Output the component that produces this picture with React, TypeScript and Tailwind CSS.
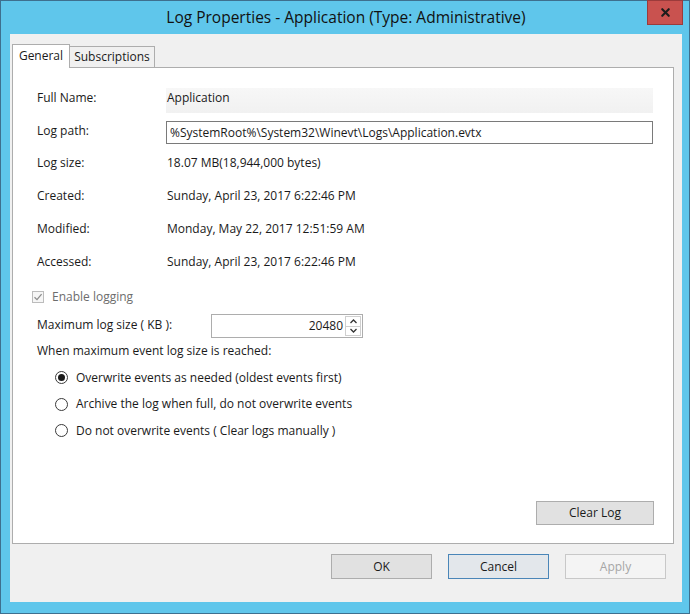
import { X } from 'lucide-react'

const font = { fontFamily: '"Open Sans", "Noto Sans", sans-serif' }

function InfoRow({ label, value }: { label: string; value: string }) {
  return (
    <div className="flex h-[33px] items-center">
      <div className="w-[129px] shrink-0">{label}</div>
      <div className="pl-[1px]">{value}</div>
    </div>
  )
}

function Radio({ checked, label }: { checked?: boolean; label: string }) {
  return (
    <div className="flex h-[26.5px] items-center">
      <span className="ml-[18px] flex h-[13px] w-[13px] items-center justify-center rounded-full border border-[#3a3a3a] bg-white">
        {checked && <span className="h-[7px] w-[7px] rounded-full bg-[#1a1a1a]" />}
      </span>
      <span className="ml-[8px]">{label}</span>
    </div>
  )
}

function DlgButton({ label, variant }: { label: string; variant?: 'focus' | 'disabled' }) {
  let cls = 'border-[#adadad] bg-[#e1e1e1] text-[#1a1a1a]'
  if (variant === 'focus') cls = 'border-[#4a86b8] bg-[#e3e7eb] text-[#1a1a1a]'
  if (variant === 'disabled') cls = 'border-[#c8c8c8] bg-[#f4f4f4] text-[#a6a6a6]'
  return (
    <div className={`flex h-[25px] w-[101px] items-center justify-center border ${cls}`}>
      {label}
    </div>
  )
}

export default function App() {
  return (
    <div
      className="flex h-[614px] w-[690px] flex-col border border-[#3e6f8e] bg-[#5fc6eb] pb-[11px] pl-[9px] pr-[7px] text-[12px] text-[#1a1a1a]"
      style={font}
    >
      {/* title bar */}
      <div className="relative flex h-[33px] shrink-0 items-center justify-center">
        <span className="text-[15.5px] text-[#111]">Log Properties - Application (Type: Administrative)</span>
        <div className="absolute right-[-1px] top-[-1px] flex h-[25px] w-[36px] items-center justify-center border border-[#9b3b3b] bg-[#c9524f]">
          <X size={13} strokeWidth={4} className="text-[#1c1c1c]" />
        </div>
      </div>

      {/* client area */}
      <div className="flex flex-1 flex-col bg-[#f0f0f0] pl-[2px] pr-[8px] pt-[11px]">
        {/* tabs */}
        <div className="relative z-10 flex h-[23px] items-end">
          <div className="flex h-[24px] w-[58px] items-center justify-center border border-b-0 border-[#adadad] bg-white pb-[1px]">
            General
          </div>
          <div className="mb-[1px] flex h-[21px] w-[85px] items-center justify-center border border-b-0 border-l-0 border-[#adadad] bg-[#f0f0f0]">
            Subscriptions
          </div>
        </div>

        {/* tab panel */}
        <div className="-mt-[1px] flex h-[477px] flex-col border border-[#adadad] bg-white pl-[24px]">
          <div className="mt-[20px] flex h-[25px] items-center pb-[6px]">
            <div className="w-[129px] shrink-0">Full Name:</div>
            <div className="-mb-[6px] flex h-[25px] w-[487px] items-center bg-gradient-to-b from-[#f7f7f7] to-[#f1f1f1] pb-[6px] pl-[1px]">
              Application
            </div>
          </div>
          <div className="mt-[8px] flex h-[23px] items-center">
            <div className="w-[129px] shrink-0 pb-[3px]">Log path:</div>
            <div className="flex h-[23px] w-[487px] items-center border border-[#7a7a7a] bg-white pl-[3px]">
              %SystemRoot%\System32\Winevt\Logs\Application.evtx
            </div>
          </div>
          <div className="mt-[2px]">
            <InfoRow label="Log size:" value="18.07 MB(18,944,000 bytes)" />
            <InfoRow label="Created:" value="Sunday, April 23, 2017 6:22:46 PM" />
            <InfoRow label="Modified:" value="Monday, May 22, 2017 12:51:59 AM" />
            <InfoRow label="Accessed:" value="Sunday, April 23, 2017 6:22:46 PM" />
          </div>

          <div className="-ml-[5px] mt-[12px] flex h-[14px] items-center text-[#6d6d6d]">
            <span className="flex h-[12px] w-[12px] items-center justify-center border border-[#bcbcbc] bg-[#f6f6f6]">
              <svg width="10" height="10" viewBox="0 0 10 10">
                <path d="M1.5 5.2 L4 7.6 L8.6 2.2" fill="none" stroke="#8d8d8d" strokeWidth="1.3" />
              </svg>
            </span>
            <span className="ml-[8px]">Enable logging</span>
          </div>

          <div className="mt-[10px] flex h-[24px] items-center">
            <div className="w-[174px] shrink-0 pb-[3px]">Maximum log size ( KB ):</div>
            <div className="flex h-[24px] w-[152px] items-center border border-[#adadad] bg-white">
              <div className="flex-1 pr-[2px] text-right">20480</div>
              <div className="mr-[1px] flex h-[20px] w-[16px] flex-col border border-[#cfcfcf]">
                <div className="flex flex-1 items-center justify-center border-b border-[#cfcfcf]">
                  <svg width="7" height="5" viewBox="0 0 7 5">
                    <path d="M0.5 4 L3.5 1 L6.5 4" fill="none" stroke="#333" strokeWidth="1.3" />
                  </svg>
                </div>
                <div className="flex flex-1 items-center justify-center">
                  <svg width="7" height="5" viewBox="0 0 7 5">
                    <path d="M0.5 1 L3.5 4 L6.5 1" fill="none" stroke="#333" strokeWidth="1.3" />
                  </svg>
                </div>
              </div>
            </div>
          </div>

          <div className="mt-[1px] flex h-[24px] items-center">When maximum event log size is reached:</div>

          <div className="mt-[1.5px]">
            <Radio checked label="Overwrite events as needed (oldest events first)" />
            <Radio label="Archive the log when full, do not overwrite events" />
            <Radio label="Do not overwrite events ( Clear logs manually )" />
          </div>

          <div className="flex-1" />
          <div className="flex justify-end pb-[18px] pr-[19px]">
            <div className="flex h-[24px] w-[118px] items-center justify-center border border-[#adadad] bg-[#e1e1e1]">
              Clear Log
            </div>
          </div>
        </div>

        {/* dialog buttons */}
        <div className="mt-[10px] flex justify-end gap-[16px] pr-[8px]">
          <DlgButton label="OK" />
          <DlgButton label="Cancel" variant="focus" />
          <DlgButton label="Apply" variant="disabled" />
        </div>
      </div>
    </div>
  )
}
